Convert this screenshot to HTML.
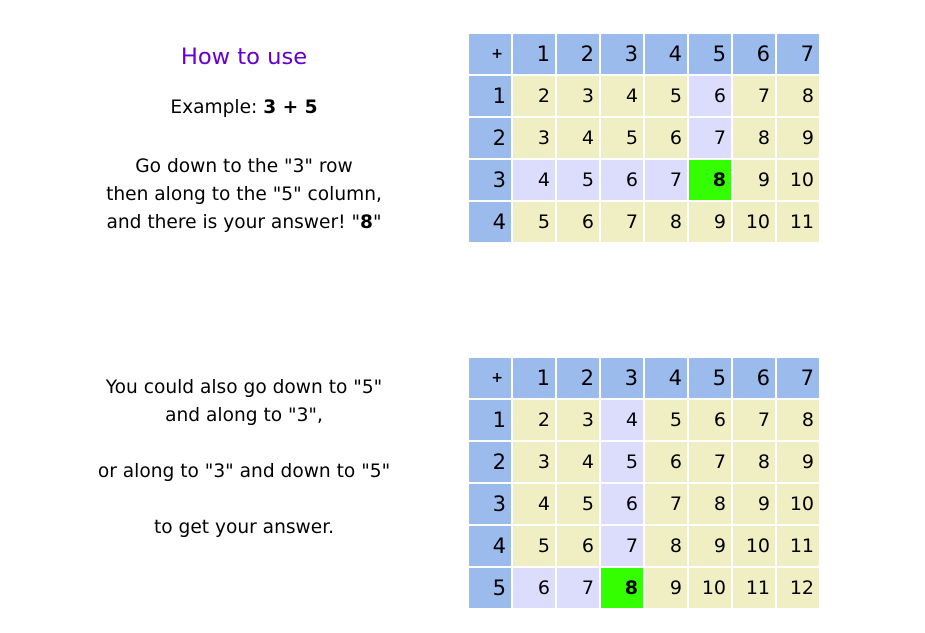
<!DOCTYPE html>
<html><head><meta charset="utf-8"><style>
body{margin:0;width:925px;height:633px;background:#fff;position:relative;font-family:"DejaVu Sans","Liberation Sans",sans-serif;color:#000;overflow:hidden}
.t{position:absolute;left:44px;width:400px;text-align:center;font-size:18.6px;line-height:28px;white-space:nowrap}
table{position:absolute;left:467px;border-spacing:2px;table-layout:fixed;width:354px;border-collapse:separate}
td{box-sizing:border-box;width:42px;height:40px;padding:0 5px 0 0;text-align:right;font-size:19px;background:#f0efc4;line-height:40px}
tr:first-child td,td:first-child{background:#9bbbec;font-size:21px}
tr:first-child td:first-child{font-size:14px;font-weight:bold;padding-right:8px}
.l{background:#dcdcfc}
.g{background:#33ff00;font-weight:bold}
</style></head><body>
<div class="t" style="top:43px;color:#6600cc;font-size:22.6px">How to use</div>
<div class="t" style="top:94px">Example: <b>3 + 5</b></div>
<div class="t" style="top:153px">Go down to the "3" row<br>then along to the "5" column,<br>and there is your answer! "<b>8</b>"</div>
<div class="t" style="top:374px">You could also go down to "5"<br>and along to "3",</div>
<div class="t" style="top:458px">or along to "3" and down to "5"</div>
<div class="t" style="top:514px">to get your answer.</div>
<table style="top:32px">
<tr><td>+</td><td>1</td><td>2</td><td>3</td><td>4</td><td>5</td><td>6</td><td>7</td></tr>
<tr><td>1</td><td>2</td><td>3</td><td>4</td><td>5</td><td class="l">6</td><td>7</td><td>8</td></tr>
<tr><td>2</td><td>3</td><td>4</td><td>5</td><td>6</td><td class="l">7</td><td>8</td><td>9</td></tr>
<tr><td>3</td><td class="l">4</td><td class="l">5</td><td class="l">6</td><td class="l">7</td><td class="g">8</td><td>9</td><td>10</td></tr>
<tr><td>4</td><td>5</td><td>6</td><td>7</td><td>8</td><td>9</td><td>10</td><td>11</td></tr>
</table>
<table style="top:356px">
<tr><td>+</td><td>1</td><td>2</td><td>3</td><td>4</td><td>5</td><td>6</td><td>7</td></tr>
<tr><td>1</td><td>2</td><td>3</td><td class="l">4</td><td>5</td><td>6</td><td>7</td><td>8</td></tr>
<tr><td>2</td><td>3</td><td>4</td><td class="l">5</td><td>6</td><td>7</td><td>8</td><td>9</td></tr>
<tr><td>3</td><td>4</td><td>5</td><td class="l">6</td><td>7</td><td>8</td><td>9</td><td>10</td></tr>
<tr><td>4</td><td>5</td><td>6</td><td class="l">7</td><td>8</td><td>9</td><td>10</td><td>11</td></tr>
<tr><td>5</td><td class="l">6</td><td class="l">7</td><td class="g">8</td><td>9</td><td>10</td><td>11</td><td>12</td></tr>
</table>
</body></html>
